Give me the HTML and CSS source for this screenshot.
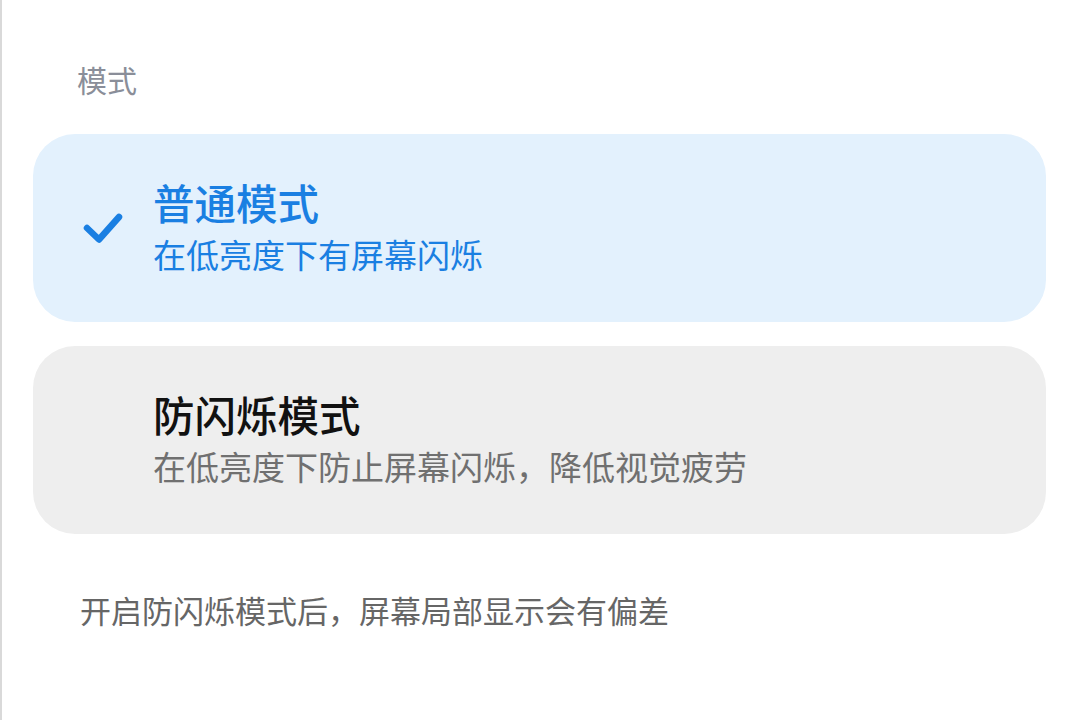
FILE: index.html
```html
<!DOCTYPE html>
<html lang="zh-CN">
<head>
<meta charset="utf-8">
<link rel="stylesheet" href="styles.css">
</head>
<body>
<main class="page">
  <div class="section-label">模式</div>
  <div class="options">
    <div class="option selected">
      <div class="check">
        <svg width="44" height="44" viewBox="0 0 44 44"><path d="M6 22 L18 33.5 L38 11" fill="none" stroke="#1a7fe2" stroke-width="6.5" stroke-linecap="round" stroke-linejoin="round"/></svg>
      </div>
      <div class="text">
        <div class="title">普通模式</div>
        <div class="desc">在低亮度下有屏幕闪烁</div>
      </div>
    </div>
    <div class="option">
      <div class="check"></div>
      <div class="text">
        <div class="title">防闪烁模式</div>
        <div class="desc">在低亮度下防止屏幕闪烁，降低视觉疲劳</div>
      </div>
    </div>
  </div>
  <div class="note">开启防闪烁模式后，屏幕局部显示会有偏差</div>
</main>
</body>
</html>
```
FILE: styles.css
```css
html, body {
  margin: 0;
  padding: 0;
  background: #ffffff;
}
body {
  width: 1080px;
  height: 720px;
  overflow: hidden;
  box-sizing: border-box;
  border-left: 2px solid #d9d9d9;
  font-family: "Noto Sans CJK SC", "Noto Sans", sans-serif;
}
.page {
  padding: 0 34px 0 31px;
}
.section-label {
  margin-top: 59px;
  padding-left: 44px;
  font-size: 30px;
  line-height: 40px;
  color: #8a8e99;
}
.options {
  margin-top: 35px;
  display: flex;
  flex-direction: column;
  gap: 24px;
}
.option {
  height: 188px;
  box-sizing: border-box;
  padding: 42px 40px 42px 48px;
  border-radius: 42px;
  background: #eeeeee;
  display: flex;
  align-items: center;
}
.option.selected {
  background: #e3f1fd;
}
.check {
  width: 44px;
  height: 44px;
  margin-right: 28px;
  flex: none;
}
.check svg {
  display: block;
}
.text {
  display: flex;
  flex-direction: column;
}
.title {
  font-size: 41.5px;
  line-height: 52px;
  font-weight: 500;
  color: #111111;
}
.desc {
  font-size: 33px;
  line-height: 52px;
  color: #707070;
}
.selected .title,
.selected .desc {
  color: #1a7fe2;
}
.note {
  margin-top: 57px;
  padding-left: 47px;
  font-size: 31px;
  line-height: 38px;
  color: #666666;
}
```
